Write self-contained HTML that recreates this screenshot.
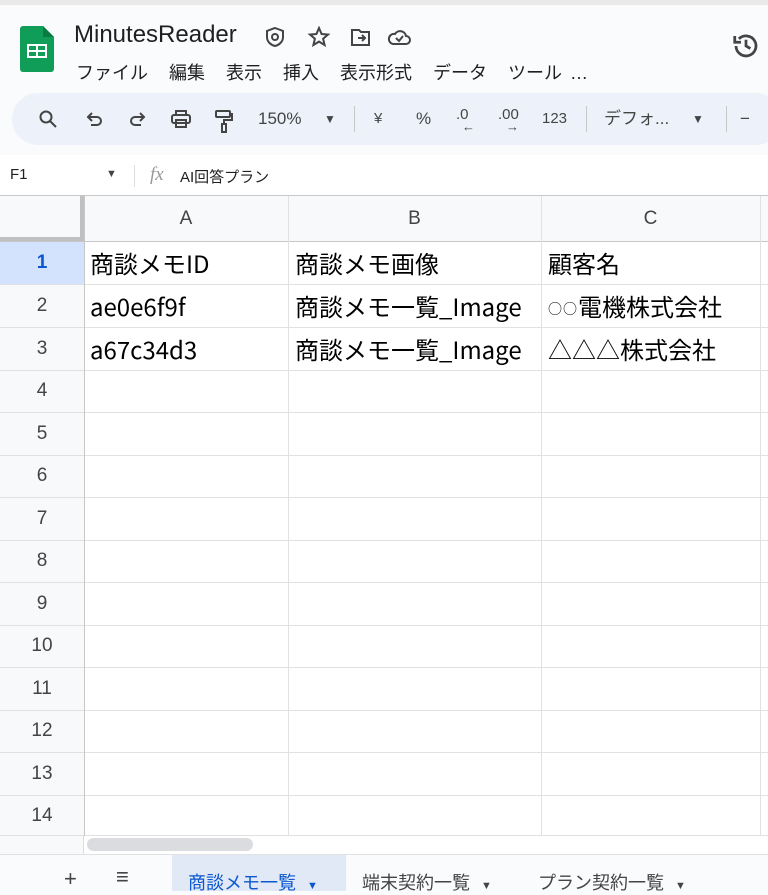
<!DOCTYPE html>
<html><head><meta charset="utf-8"><style>
*{box-sizing:border-box;margin:0;padding:0}
body{width:768px;height:891px;overflow:hidden;background:#f9fbfd;font-family:"Liberation Sans","Noto Sans CJK JP",sans-serif;position:relative;color:#1f1f1f}
.abs{position:absolute}
.menu span{margin-right:21px}
.tb{position:absolute;top:93px;left:12px;width:770px;height:52px;background:#edf2fa;border-radius:26px}
.tb .i{position:absolute;top:0;height:52px;line-height:52px;font-size:17px;color:#444}
.tb svg{position:absolute;top:16px}
.grid{position:absolute;top:196px;left:0;width:768px;height:640px;background:#fff}
.hl{position:absolute;left:0;width:768px;height:1px;background:#e1e1e1}
.vl{position:absolute;top:0;width:1px;height:640px;background:#e1e1e1}
.rn{position:absolute;left:0;width:84px;text-align:center;font-size:19px;color:#444}
.cell{position:absolute;font-family:"Noto Sans CJK JP",sans-serif;font-size:24px;line-height:43px;height:43px;white-space:nowrap;overflow:hidden;color:#000}
</style></head><body>
<div class="abs" style="top:0;left:0;width:768px;height:5px;background:#e9e9e9"></div>
<svg class="abs" style="left:20px;top:26px" width="34" height="46" viewBox="0 0 34 46"><path d="M3 0h20l11 11v32a3 3 0 0 1-3 3H3a3 3 0 0 1-3-3V3a3 3 0 0 1 3-3z" fill="#0f9d58"/><path d="M23 0l11 11H23z" fill="#0a7a43"/><rect x="7" y="18" width="20" height="14" fill="#fff"/><rect x="9" y="20" width="7" height="4" fill="#0f9d58"/><rect x="18" y="20" width="7" height="4" fill="#0f9d58"/><rect x="9" y="26" width="7" height="4" fill="#0f9d58"/><rect x="18" y="26" width="7" height="4" fill="#0f9d58"/></svg>
<div class="abs" style="left:74px;top:21px;font-size:24px">MinutesReader</div>
<svg class="abs" style="left:264px;top:26px" width="150" height="22" viewBox="0 0 150 22" fill="none" stroke="#444" stroke-width="2">
<path d="M11 2l8 3v6c0 5-4 8-8 9c-4-1-8-4-8-9V5z"/><circle cx="11" cy="11" r="3"/>
<path d="M55 2l2.6 6 6.4.5-4.9 4.2 1.5 6.3L55 15.6 49.4 19l1.5-6.3L46 8.5l6.4-.5z"/>
<path d="M88 4h7l2 2h8v13H88z"/><path d="M94 12h6M98 9l3 3-3 3"/>
<path d="M129 18h13a4 4 0 0 0 0-8 6 6 0 0 0-11-2 5 5 0 0 0-2 10z"/><path d="M132 12l3 3 4-5"/>
</svg>
<svg class="abs" style="left:731px;top:31px" width="30" height="30" viewBox="0 0 24 24" fill="none" stroke="#444" stroke-width="2.2"><path d="M4 12a8 8 0 1 0 2.3-5.7"/><path d="M3 4v5h5"/><path d="M12 7v5l3.5 2"/></svg>
<div class="abs menu" style="left:76px;top:59px;font-size:18px;color:#1f1f1f"><span>ファイル</span><span>編集</span><span>表示</span><span>挿入</span><span>表示形式</span><span>データ</span><span style="margin-right:8px">ツール</span>…</div>
<div class="tb">
<svg style="left:26px" width="20" height="20" viewBox="0 0 20 20" fill="none" stroke="#444" stroke-width="2"><circle cx="8" cy="8" r="5.5"/><path d="M12 12l6 6"/></svg>
<svg style="left:74px" width="18" height="20" viewBox="0 0 18 20" fill="none" stroke="#444" stroke-width="2"><path d="M3 8h8a4 4 0 0 1 0 8H5"/><path d="M6 4L2 8l4 4"/></svg>
<svg style="left:116px" width="18" height="20" viewBox="0 0 18 20" fill="none" stroke="#444" stroke-width="2"><path d="M15 8H7a4 4 0 0 0 0 8h6"/><path d="M12 4l4 4-4 4"/></svg>
<svg style="left:158px" width="22" height="20" viewBox="0 0 22 20" fill="none" stroke="#444" stroke-width="2"><path d="M6 6V2h10v4"/><rect x="2" y="6" width="18" height="8" rx="2"/><rect x="6" y="11" width="10" height="7"/></svg>
<svg style="left:202px" width="20" height="24" viewBox="0 0 20 24" fill="none" stroke="#444" stroke-width="2"><rect x="2" y="2" width="14" height="6" rx="1"/><path d="M16 5h2v6H10v4"/><rect x="8" y="15" width="4" height="8"/></svg>
<div class="i" style="left:246px">150%</div>
<div class="i" style="left:312px;font-size:12px">▼</div>
<div class="abs" style="left:342px;top:13px;width:1px;height:26px;background:#c7c7c7"></div>
<div class="i" style="left:362px;font-size:15px">¥</div>
<div class="i" style="left:404px">%</div>
<div class="i" style="left:444px;font-size:15px;top:-4px">.0</div>
<div class="i" style="left:450px;font-size:13px;top:8px">←</div>
<div class="i" style="left:486px;font-size:15px;top:-4px">.00</div>
<div class="i" style="left:494px;font-size:13px;top:8px">→</div>
<div class="i" style="left:530px;font-size:15px">123</div>
<div class="abs" style="left:574px;top:13px;width:1px;height:26px;background:#c7c7c7"></div>
<div class="i" style="left:592px">デフォ...</div>
<div class="i" style="left:680px;font-size:12px">▼</div>
<div class="abs" style="left:714px;top:13px;width:1px;height:26px;background:#c7c7c7"></div>
<div class="i" style="left:728px">−</div>
</div>
<div class="abs" style="top:155px;left:0;width:768px;height:41px;background:#fff;border-bottom:1px solid #c7c7c7"></div>
<div class="abs" style="left:10px;top:166px;font-size:15px">F1</div>
<div class="abs" style="left:106px;top:168px;font-size:11px;color:#444">▼</div>
<div class="abs" style="left:134px;top:165px;width:1px;height:22px;background:#ddd"></div>
<div class="abs" style="left:150px;top:164px;font-size:19px;font-style:italic;color:#999;font-family:'Liberation Serif',serif">fx</div>
<div class="abs" style="left:180px;top:166px;font-size:15px">AI回答プラン</div>
<div class="grid">
<div class="abs" style="left:0;top:0;width:768px;height:45px;background:#f8f9fa"></div>
<div class="abs" style="left:0;top:0;width:84px;height:640px;background:#f8f9fa"></div>
<div class="abs" style="left:0;top:0;background:#f8f9fa;border-right:4px solid #c0c0c0;border-bottom:4px solid #c0c0c0;width:84px;height:45px"></div>
<div class="abs" style="left:0;top:45px;width:84px;height:43px;background:#d3e3fd"></div>
<div class="abs" style="left:84px;top:0;width:204px;height:45px;line-height:45px;text-align:center;font-size:19px;color:#444">A</div>
<div class="abs" style="left:288px;top:0;width:253px;height:45px;line-height:45px;text-align:center;font-size:19px;color:#444">B</div>
<div class="abs" style="left:541px;top:0;width:219px;height:45px;line-height:45px;text-align:center;font-size:19px;color:#444">C</div>
<div class="hl" style="top:45px;background:#c7c7c7"></div>
<div class="hl" style="top:88px"></div><div class="hl" style="top:131px"></div><div class="hl" style="top:174px"></div>
<div class="hl" style="top:216px"></div><div class="hl" style="top:259px"></div><div class="hl" style="top:301px"></div>
<div class="hl" style="top:344px"></div><div class="hl" style="top:386px"></div><div class="hl" style="top:429px"></div>
<div class="hl" style="top:471px"></div><div class="hl" style="top:514px"></div><div class="hl" style="top:556px"></div>
<div class="hl" style="top:599px"></div><div class="hl" style="top:639px"></div>
<div class="vl" style="left:84px;background:#c7c7c7"></div><div class="vl" style="left:288px"></div><div class="vl" style="left:541px"></div><div class="vl" style="left:760px"></div>
<div class="rn" style="top:56px;font-weight:bold;color:#0b57d0">1</div>
<div class="rn" style="top:99px">2</div><div class="rn" style="top:142px">3</div><div class="rn" style="top:184px">4</div>
<div class="rn" style="top:227px">5</div><div class="rn" style="top:269px">6</div><div class="rn" style="top:312px">7</div>
<div class="rn" style="top:354px">8</div><div class="rn" style="top:397px">9</div><div class="rn" style="top:439px">10</div>
<div class="rn" style="top:482px">11</div><div class="rn" style="top:524px">12</div><div class="rn" style="top:567px">13</div>
<div class="rn" style="top:609px">14</div>
<div class="cell" style="left:90px;top:45px">商談メモID</div>
<div class="cell" style="left:295px;top:45px">商談メモ画像</div>
<div class="cell" style="left:548px;top:45px">顧客名</div>
<div class="cell" style="left:90px;top:88px">ae0e6f9f</div>
<div class="cell" style="left:295px;top:88px;width:246px">商談メモ一覧_Image</div>
<div class="cell" style="left:548px;top:88px;width:212px"><span style="font-size:14px;letter-spacing:1px;vertical-align:2px">○○</span>電機株式会社</div>
<div class="cell" style="left:90px;top:131px">a67c34d3</div>
<div class="cell" style="left:295px;top:131px;width:246px">商談メモ一覧_Image</div>
<div class="cell" style="left:548px;top:131px;width:212px">△△△株式会社</div>
</div>
<div class="abs" style="top:836px;left:0;width:768px;height:19px;background:#fff"></div>
<div class="abs" style="top:836px;left:0;width:84px;height:19px;background:#f8f9fa;border-right:1px solid #ddd"></div>
<div class="abs" style="top:838px;left:87px;width:166px;height:13px;border-radius:7px;background:#dadce0"></div>
<div class="abs" style="top:854px;left:0;width:768px;height:37px;background:#f9fbfd;border-top:1px solid #e1e1e1"></div>
<div class="abs" style="left:64px;top:866px;font-size:22px;color:#444">+</div>
<div class="abs" style="left:116px;top:864px;font-size:22px;color:#444">≡</div>
<div class="abs" style="left:172px;top:855px;width:174px;height:36px;background:#e1e9f7"></div>
<div class="abs" style="left:188px;top:869px;font-size:18px;color:#0b57d0">商談メモ一覧 <span style="font-size:11px;margin-left:6px">▼</span></div>
<div class="abs" style="left:362px;top:869px;font-size:18px;color:#444">端末契約一覧 <span style="font-size:11px;margin-left:6px">▼</span></div>
<div class="abs" style="left:538px;top:869px;font-size:18px;color:#444">プラン契約一覧 <span style="font-size:11px;margin-left:6px">▼</span></div>
</body></html>
